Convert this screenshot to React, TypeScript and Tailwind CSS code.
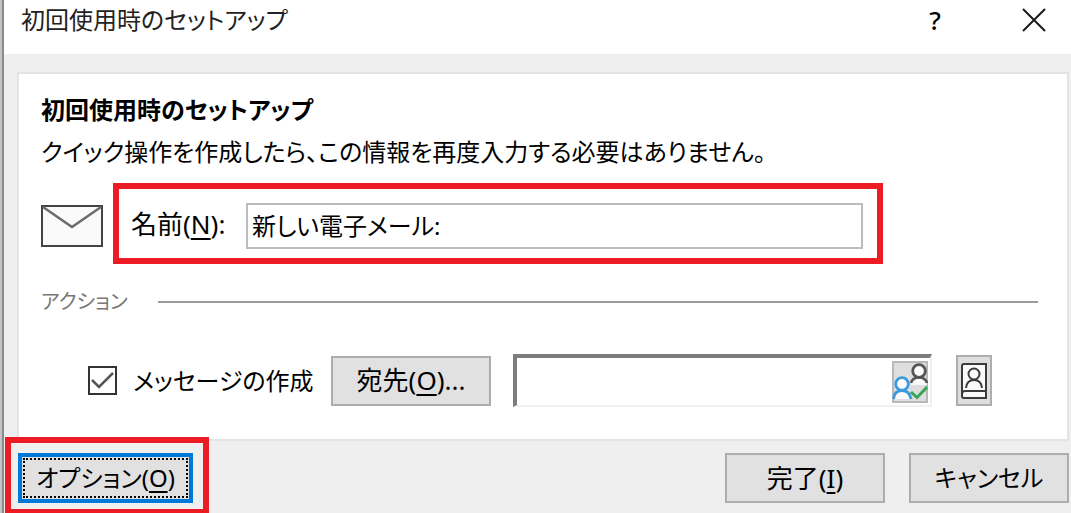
import type { ReactNode } from 'react';
import clsx from 'clsx';

interface DialogButtonProps {
  children: ReactNode;
  className?: string;
}

function DialogButton({ children, className }: DialogButtonProps) {
  return (
    <button
      type="button"
      className={clsx('h-[50px] shrink-0 whitespace-nowrap bg-[#e1e1e1]', className)}
    >
      {children}
    </button>
  );
}

// Underlined access key, e.g. (N)
function Key({ children }: { children: string }) {
  return <span className="underline decoration-2 underline-offset-4">{children}</span>;
}

function CloseIcon() {
  return (
    <svg viewBox="0 0 24 24" className="h-6 w-6" fill="none" stroke="#1a1a1a" strokeWidth="2">
      <path d="M1 1l22 22M23 1L1 23" />
    </svg>
  );
}

function EnvelopeIcon() {
  return (
    <svg viewBox="0 0 62 42" className="mt-1 h-[42px] w-[62px] shrink-0" fill="none">
      <rect x="1" y="1" width="60" height="40" fill="#fafafa" stroke="#444" strokeWidth="2" />
      <path d="M2 2l29 20L60 2" stroke="#6b6b6b" strokeWidth="2.4" />
    </svg>
  );
}

function CheckNamesIcon() {
  return (
    <svg viewBox="0 0 36 42" className="h-[42px] w-9 shrink-0" fill="none">
      <path d="M19 24c0-5 3-8 8-8s8 3 8 8z" fill="#fafafa" />
      <circle cx="27" cy="10" r="6.3" fill="#fafafa" stroke="#555" strokeWidth="2.8" />
      <path d="M19 22c1-4 4-5.500 8-5.500s7 2 8 5.500" stroke="#555" strokeWidth="2.6" />
      <path d="M2 38c0-8 3-12 8-12s8 4 9 12z" fill="#fafafa" />
      <circle cx="10" cy="23" r="6.3" fill="#fafafa" stroke="#3a9bdc" strokeWidth="2.8" />
      <path d="M1.500 38c.5-5.500 3-8.500 8.500-8.500 5 0 8 3 9 8.500" stroke="#3a9bdc" strokeWidth="2.8" />
      <path d="M19 31l6 5.500L35 26" stroke="#3aa655" strokeWidth="3" />
    </svg>
  );
}

function AddressBookIcon() {
  return (
    <svg viewBox="0 0 26 36" className="h-9 w-[26px] shrink-0" fill="none" stroke="#3b3b3b" strokeWidth="2">
      <path d="M3 1h22v34H3a2 2 0 0 1-2-2V3a2 2 0 0 1 2-2z" fill="#fafafa" />
      <path d="M1 31c0-2 1-3 3-3h21" />
      <circle cx="13" cy="11" r="5.5" />
      <path d="M5 25c.5-5 3-8 8-8s7.500 3 8 8" />
    </svg>
  );
}

export default function App() {
  return (
    <div className="flex min-h-screen overflow-hidden border-l-2 border-[#c4c4c4] font-['Noto_Sans','Noto_Sans_CJK_JP',sans-serif] text-2xl text-black [font-feature-settings:'palt']">
      <div className="flex min-w-0 flex-1 flex-col border-l-2 border-[#8a8a8a] bg-[#efefef]">
        <header className="flex h-[54px] items-center bg-white pb-[14px] pl-[17px] pr-[25px]">
          <h1 className="flex-1 text-[#222]">初回使用時のセットアップ</h1>
          <button type="button" aria-label="ヘルプ" className="w-6 text-[26px] font-medium">
            ?
          </button>
          <button type="button" aria-label="閉じる" className="ml-[75px]">
            <CloseIcon />
          </button>
        </header>

        <main className="ml-[13px] mr-0.5 mt-[18px] border-2 border-[#e3e4e8] bg-white pb-8 pl-[22px] pr-[29px] pt-4">
          <h2 className="font-bold leading-10">初回使用時のセットアップ</h2>
          <p className="mt-0.5 leading-10">
            クイック操作を作成したら、この情報を再度入力する必要はありません。
          </p>

          <div className="mt-[11px] flex items-center">
            <EnvelopeIcon />
            <div className="ml-[10px] mr-[155px] flex flex-1 items-center border-[6px] border-[#ed1c24] pb-[9px] pl-3 pr-[14px] pt-[14px]">
              <label htmlFor="name" className="w-[115px] shrink-0 whitespace-nowrap pb-1 text-[26px] leading-9">
                名前(<Key>N</Key>):
              </label>
              <input
                id="name"
                type="text"
                defaultValue="新しい電子メール:"
                className="h-[46px] min-w-0 flex-1 border-2 border-[#bbbbc0] bg-white px-1 pb-1 outline-none"
              />
            </div>
          </div>

          <div className="mt-5 flex items-center text-[#777]">
            <h3 className="w-[117px] text-xl leading-9">アクション</h3>
            <hr className="flex-1 border-t-2 border-[#9c9c9c]" />
          </div>

          <div className="mt-[34px] flex items-center pl-[47px] pr-[46px]">
            <label className="flex w-[243px] shrink-0 items-center gap-4">
              <span className="relative flex">
                <input
                  type="checkbox"
                  defaultChecked
                  className="peer h-[29px] w-[29px] appearance-none border-2 border-[#333] bg-white"
                />
                <svg
                  viewBox="0 0 29 29"
                  className="pointer-events-none absolute inset-0 hidden peer-checked:block"
                  fill="none"
                  stroke="#555"
                  strokeWidth="2.5"
                >
                  <path d="M4 14l7 7L25 7" />
                </svg>
              </span>
              メッセージの作成
            </label>
            <DialogButton className="w-40 border-2 border-[#adadad] text-[26px]">
              宛先(<Key>O</Key>)...
            </DialogButton>
            <div className="ml-[22px] flex h-[53px] min-w-0 flex-1 items-center border-b-2 border-l-4 border-r-2 border-t-4 border-b-[#f0f0f0] border-l-[#7d7d7d] border-r-[#f0f0f0] border-t-[#7d7d7d] bg-white pr-0.5">
              <input type="text" aria-label="宛先" className="h-full min-w-0 flex-1 px-1 outline-none" />
              <button
                type="button"
                aria-label="名前の確認"
                className="flex h-[42px] w-9 shrink-0 items-center justify-center border-2 border-[#b8b8b8] bg-[#dedede]"
              >
                <CheckNamesIcon />
              </button>
            </div>
            <button
              type="button"
              aria-label="アドレス帳"
              className="ml-6 flex h-[51px] w-9 shrink-0 items-center justify-center border-2 border-[#adadad] bg-[#dedede]"
            >
              <AddressBookIcon />
            </button>
          </div>
        </main>

        <footer className="flex items-center gap-6 pb-[10px] pl-[14px] pr-0.5 pt-3">
          <div className="relative mr-auto">
            <DialogButton className="w-[175px] border-4 border-[#0078d7] p-px">
              <span className="flex h-full items-center justify-center border-2 border-dotted border-black">
                <span>
                  オプション(<Key>O</Key>)
                </span>
              </span>
            </DialogButton>
            <div className="pointer-events-none absolute -bottom-3 -left-[13px] -right-4 -top-4 border-[6px] border-[#ed1c24]" />
          </div>
          <DialogButton className="w-40 border-2 border-[#adadad] text-[26px]">
            完了(<Key>I</Key>)
          </DialogButton>
          <DialogButton className="w-40 border-2 border-[#adadad]">キャンセル</DialogButton>
        </footer>
      </div>
    </div>
  );
}
